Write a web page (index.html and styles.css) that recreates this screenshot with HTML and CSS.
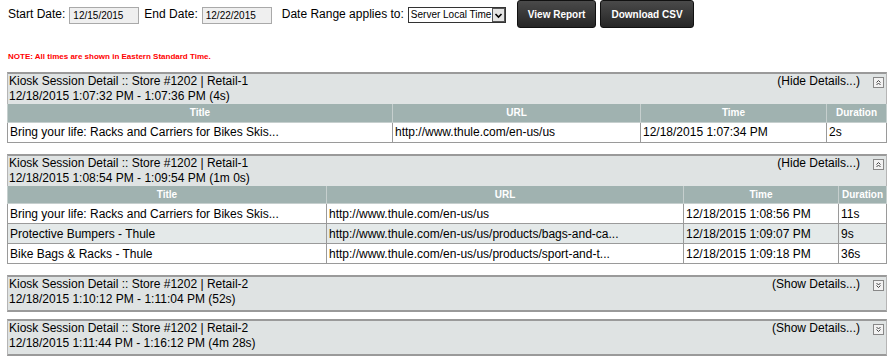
FILE: index.html
```html
<!DOCTYPE html>
<html lang="en">
<head>
    <meta charset="UTF-8">
    <title>Kiosk Session Report</title>
    <link rel="stylesheet" href="styles.css">
</head>
<body>
    <div class="toolbar">
        <label>Start Date:</label>
        <input type="text" class="date-input" value="12/15/2015">
        <label>End Date:</label>
        <input type="text" class="date-input" value="12/22/2015">
        <label class="range-label">Date Range applies to:</label>
        <div class="select-box">
            <span class="select-text">Server Local Time</span>
            <span class="select-arrow">
                <svg width="9" height="9" viewBox="0 0 9 9"><path d="M1.5 3 L4.5 6 L7.5 3" fill="none" stroke="#000" stroke-width="1.6"/></svg>
            </span>
        </div>
        <button class="btn">View Report</button>
        <button class="btn">Download CSV</button>
    </div>

    <p class="note">NOTE: All times are shown in Eastern Standard Time.</p>

    <div class="sessions">
        <div class="session">
            <div class="session-head">
                <div class="session-info">
                    <div>Kiosk Session Detail :: Store #1202 | Retail-1</div>
                    <div>12/18/2015 1:07:32 PM - 1:07:36 PM (4s)</div>
                </div>
                <span class="toggle">(Hide Details...)</span>
                <span class="toggle-icon"><svg width="9" height="9" viewBox="0 0 9 9"><path d="M2.5 4.5 L4.5 2.5 L6.5 4.5 M2.5 7 L4.5 5 L6.5 7" fill="none" stroke="#444" stroke-width="1"/></svg></span>
            </div>
            <table class="detail">
                <colgroup><col style="width:385px"><col style="width:248px"><col style="width:186px"><col></colgroup>
                <tr><th>Title</th><th>URL</th><th>Time</th><th>Duration</th></tr>
                <tr><td>Bring your life: Racks and Carriers for Bikes Skis...</td><td>http://www.thule.com/en-us/us</td><td>12/18/2015 1:07:34 PM</td><td>2s</td></tr>
            </table>
        </div>

        <div class="session">
            <div class="session-head">
                <div class="session-info">
                    <div>Kiosk Session Detail :: Store #1202 | Retail-1</div>
                    <div>12/18/2015 1:08:54 PM - 1:09:54 PM (1m 0s)</div>
                </div>
                <span class="toggle">(Hide Details...)</span>
                <span class="toggle-icon"><svg width="9" height="9" viewBox="0 0 9 9"><path d="M2.5 4.5 L4.5 2.5 L6.5 4.5 M2.5 7 L4.5 5 L6.5 7" fill="none" stroke="#444" stroke-width="1"/></svg></span>
            </div>
            <table class="detail">
                <colgroup><col style="width:319px"><col style="width:357px"><col style="width:155px"><col></colgroup>
                <tr><th>Title</th><th>URL</th><th>Time</th><th>Duration</th></tr>
                <tr><td>Bring your life: Racks and Carriers for Bikes Skis...</td><td>http://www.thule.com/en-us/us</td><td>12/18/2015 1:08:56 PM</td><td>11s</td></tr>
                <tr class="alt"><td>Protective Bumpers - Thule</td><td>http://www.thule.com/en-us/us/products/bags-and-ca...</td><td>12/18/2015 1:09:07 PM</td><td>9s</td></tr>
                <tr><td>Bike Bags &amp; Racks - Thule</td><td>http://www.thule.com/en-us/us/products/sport-and-t...</td><td>12/18/2015 1:09:18 PM</td><td>36s</td></tr>
            </table>
        </div>

        <div class="session collapsed">
            <div class="session-head">
                <div class="session-info">
                    <div>Kiosk Session Detail :: Store #1202 | Retail-2</div>
                    <div>12/18/2015 1:10:12 PM - 1:11:04 PM (52s)</div>
                </div>
                <span class="toggle">(Show Details...)</span>
                <span class="toggle-icon"><svg width="9" height="9" viewBox="0 0 9 9"><path d="M2.5 2 L4.5 4 L6.5 2 M2.5 4.5 L4.5 6.5 L6.5 4.5" fill="none" stroke="#444" stroke-width="1"/></svg></span>
            </div>
        </div>

        <div class="session collapsed">
            <div class="session-head">
                <div class="session-info">
                    <div>Kiosk Session Detail :: Store #1202 | Retail-2</div>
                    <div>12/18/2015 1:11:44 PM - 1:16:12 PM (4m 28s)</div>
                </div>
                <span class="toggle">(Show Details...)</span>
                <span class="toggle-icon"><svg width="9" height="9" viewBox="0 0 9 9"><path d="M2.5 2 L4.5 4 L6.5 2 M2.5 4.5 L4.5 6.5 L6.5 4.5" fill="none" stroke="#444" stroke-width="1"/></svg></span>
            </div>
        </div>
    </div>
</body>
</html>
```

FILE: styles.css
```css
* {
    box-sizing: border-box;
}

body {
    margin: 0;
    padding: 0 9px 0 7px;
    font-family: "Liberation Sans", Arial, sans-serif;
    font-size: 12px;
    color: #000;
    background: #fff;
}

.toolbar {
    display: flex;
    align-items: center;
    height: 28px;
    padding-left: 1px;
}

.toolbar label {
    font-size: 12px;
    margin-right: 4px;
}

.date-input {
    width: 70px;
    height: 17px;
    margin: 2px 5px 0 0;
    padding: 0 0 0 3px;
    border: 1px solid #a9a9a9;
    background: #efefef;
    font-family: inherit;
    font-size: 10px;
    color: #000;
}

.range-label {
    margin-left: 5px;
}

.select-box {
    display: flex;
    align-items: stretch;
    width: 98px;
    height: 16px;
    margin: 2px 11px 0 0;
    border: 1px solid #333;
    background: #fff;
    font-size: 10px;
}

.select-text {
    flex: 1;
    padding-left: 2px;
    line-height: 14px;
    white-space: nowrap;
    overflow: hidden;
}

.select-arrow {
    width: 13px;
    border: 1px solid #555;
    background: #e4e4e4;
    display: flex;
    align-items: center;
    justify-content: center;
}

.btn {
    height: 28px;
    margin-right: 4px;
    padding: 0 10px;
    border: 1px solid #111;
    border-radius: 3px;
    background: linear-gradient(#4a4a4a, #262626);
    color: #fff;
    font-family: inherit;
    font-size: 10px;
    font-weight: bold;
    white-space: nowrap;
}

.note {
    margin: 24px 0 0 1px;
    color: #f00;
    font-size: 8px;
    font-weight: bold;
}

.sessions {
    margin-top: 11px;
}

.session {
    margin-bottom: 11px;
}

.session.collapsed {
    margin-bottom: 7px;
}

.session-head {
    display: flex;
    align-items: flex-start;
    background: #dfe3e3;
    border-top: 2px solid #9a9a9a;
    border-left: 1px solid #b5b5b5;
    border-right: 1px solid #b5b5b5;
    padding: 0 0 0 1px;
    line-height: 15px;
}

.session.collapsed .session-head {
    border-bottom: 2px solid #9a9a9a;
    padding-bottom: 3px;
}

.session-info {
    flex: 1;
}

.toggle-icon {
    display: flex;
    width: 11px;
    height: 11px;
    margin: 3px 2px 0 13px;
    border: 1px solid #888;
    background: #f2f2f2;
    align-items: center;
    justify-content: center;
}

.detail {
    width: 100%;
    border-collapse: collapse;
    table-layout: fixed;
    background: #fff;
}

.detail th {
    height: 18px;
    background: #a0b2b0;
    color: #fff;
    font-size: 10px;
    font-weight: bold;
    border: 1px solid #c6cfce;
    border-top: none;
}

.detail td {
    height: 20px;
    padding: 0 2px;
    border: 1px solid #9a9a9a;
    white-space: nowrap;
    overflow: hidden;
}

.detail tr.alt td {
    background: #e4e9e9;
}
```
